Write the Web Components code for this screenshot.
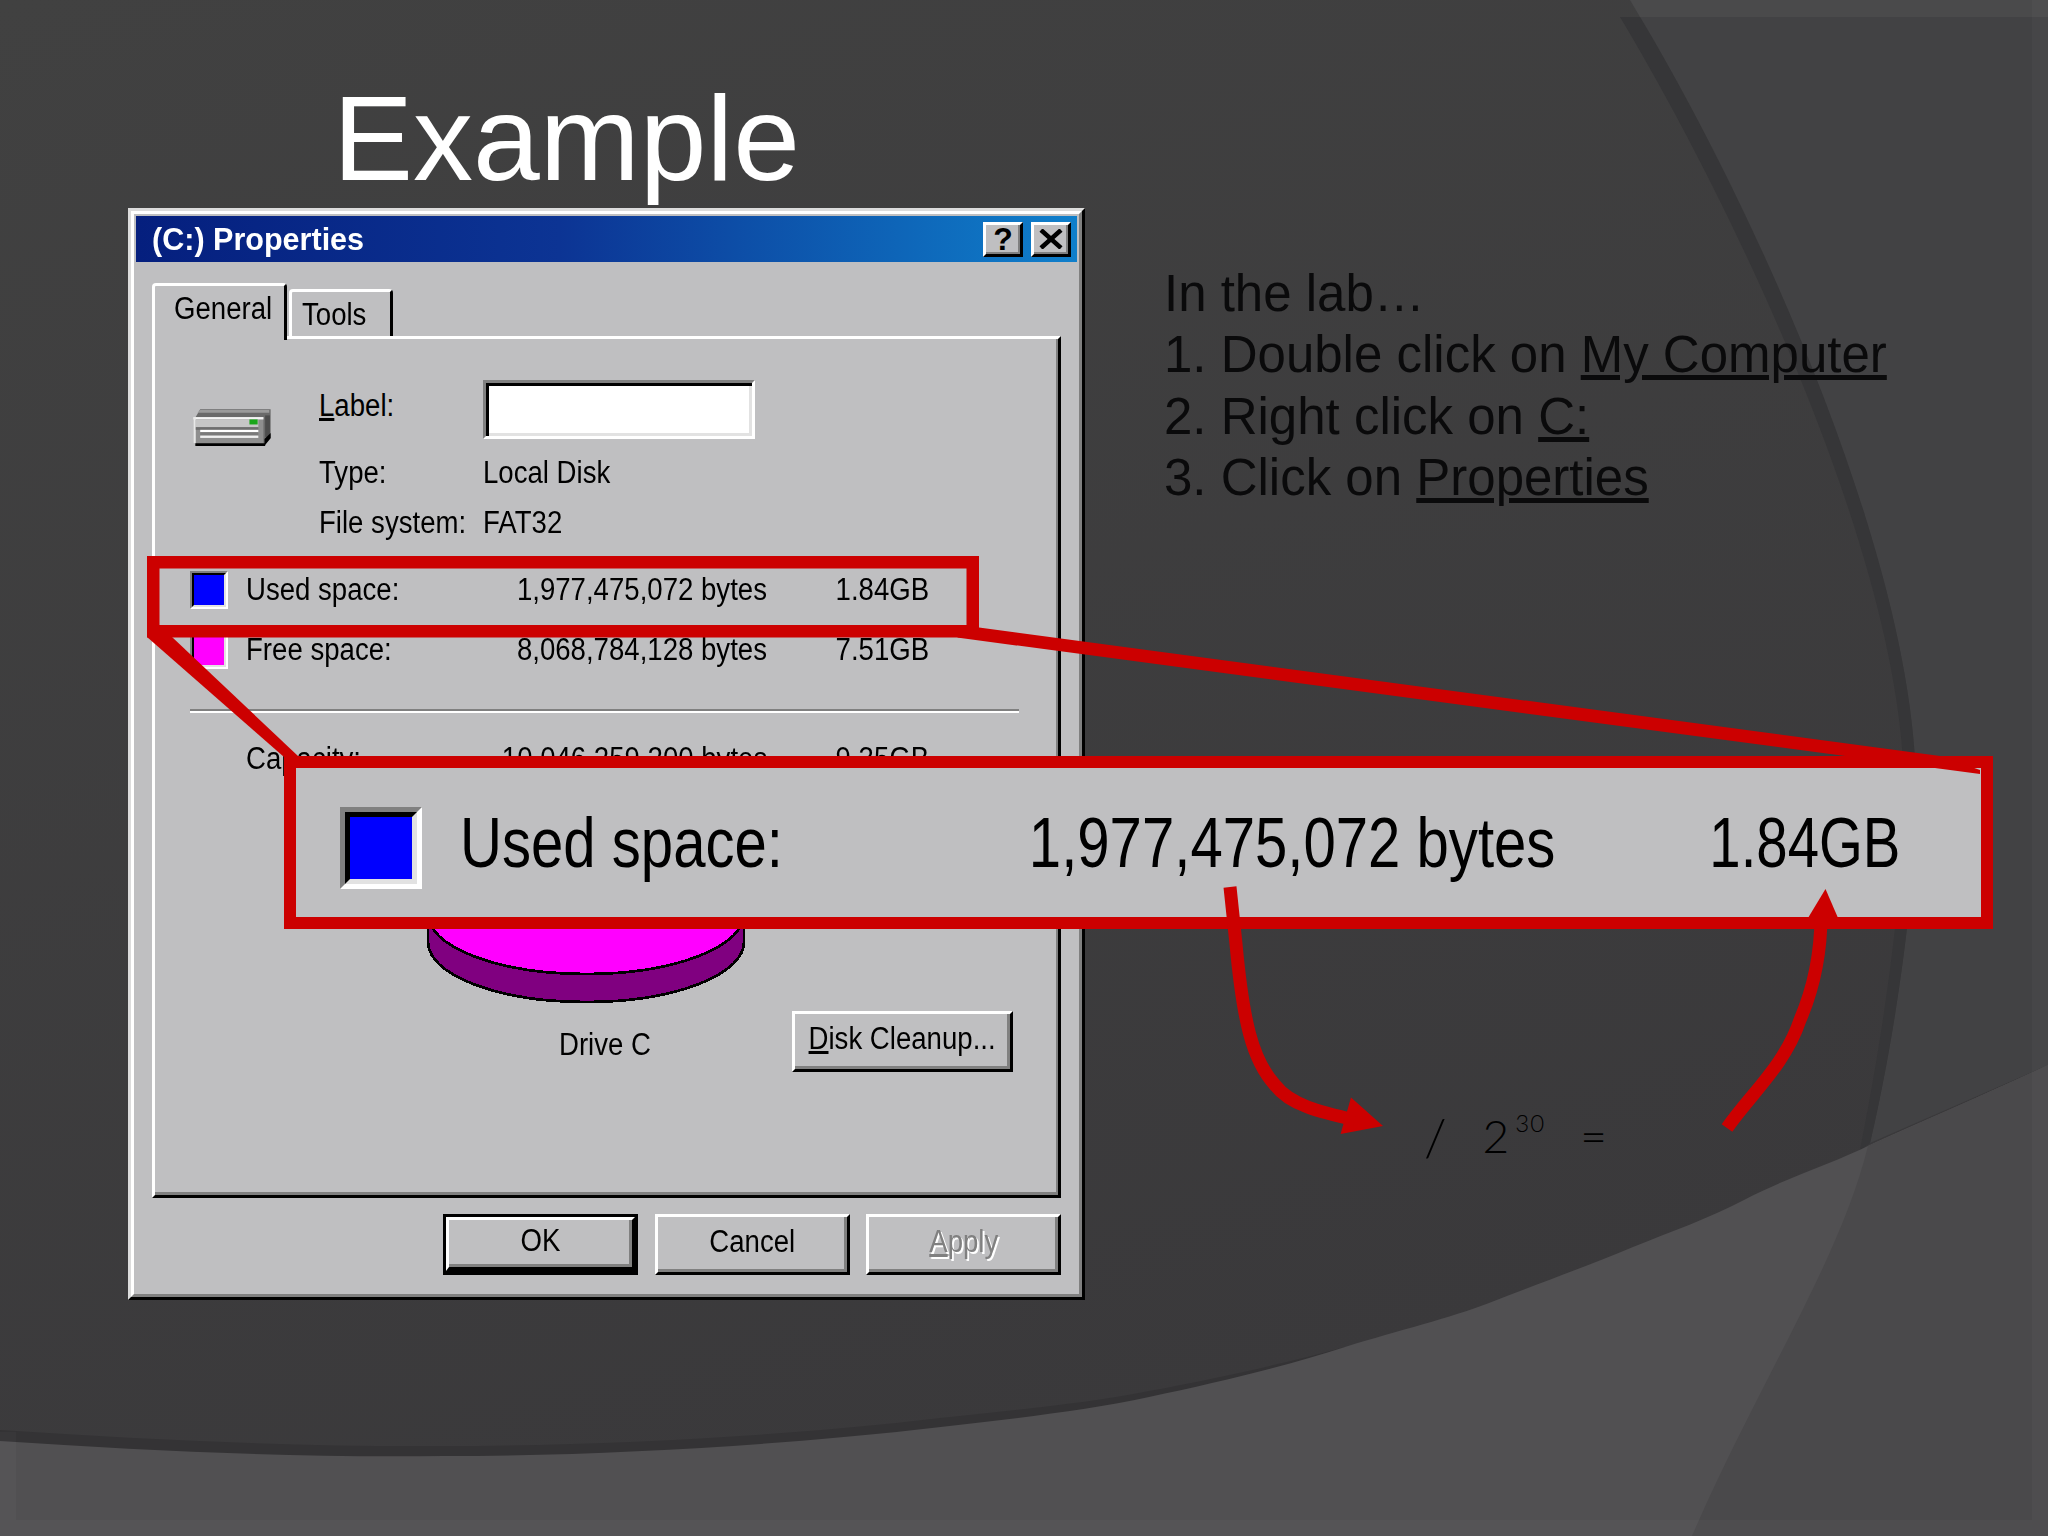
<!DOCTYPE html>
<html lang="en">
<head>
<meta charset="utf-8">
<title>Example</title>
<style>
   html, body { margin: 0; background: #3e3e40; }
   body { font-family: "Liberation Sans", Arial, sans-serif; }
</style>
</head>
<body>

<slide-deck>
   <slide-title slot="title">Example</slide-title>

   <win-dialog slot="window" caption="(C:) Properties">
      <win-tabs slot="tabs"></win-tabs>
      <drive-page slot="page"></drive-page>
      <win-btn slot="actions" default>OK</win-btn>
      <win-btn slot="actions">Cancel</win-btn>
      <win-btn slot="actions" disabled><u>A</u>pply</win-btn>
   </win-dialog>

   <lab-steps slot="notes">
      <div>In the lab…</div>
      <div>1. Double click on <u>My Computer</u></div>
      <div>2. Right click on <u>C:</u></div>
      <div>3. Click on <u>Properties</u></div>
   </lab-steps>

   <zoom-callout slot="overlay">
      <space-row swatch="#0000ff" label="Used space:" bytes="1,977,475,072 bytes" size="1.84GB" big></space-row>
   </zoom-callout>
</slide-deck>

<script>
// every bit of dialog text is stretched tall and narrow like the old bitmap font
const dlg_text_template = document.createElement('template');
dlg_text_template.innerHTML = `
   <style>
      :host {
         display: inline-block;
         white-space: nowrap;
         transform: scaleX(var(--sx, .89));
         transform-origin: left center;
      }
      :host([align="end"]) { transform-origin: right center; }
      :host([align="mid"]) { transform-origin: center center; }
   </style>
   <slot></slot>
`;

class DlgText extends HTMLElement
{
   connectedCallback()
   {
      if (this.shadowRoot) return;
      this.attachShadow({ mode: 'open' }).appendChild(dlg_text_template.content.cloneNode(true));
   }
}
customElements.define('dlg-text', DlgText);

const backdrop_template = document.createElement('template');
backdrop_template.innerHTML = `
   <style>
      :host { position: absolute; inset: 0; display: block; }
      svg { display: block; width: 100%; height: 100%; }
   </style>
   <svg viewBox="0 0 2048 1536" aria-hidden="true">
      <defs>
         <linearGradient id="base" x1="0" y1="0" x2="0.4" y2="1">
            <stop offset="0" stop-color="#414141"/>
            <stop offset="1" stop-color="#3a393b"/>
         </linearGradient>
      </defs>
      <rect width="2048" height="1536" fill="url(#base)"/>
      <path d="M1640 17 C1750 200 1916 560 1916 791 C1916 900 1892 1050 1870 1143 L2048 1065 L2048 17 Z" fill="#424244"/>
      <path d="M1630 0 L2048 0 L2048 17 L1640 17 Z" fill="#4a4a4b"/>
      <path d="M1620 17 C1730 200 1904 560 1904 791 C1904 900 1880 1050 1860 1150 L1870 1143 C1892 1050 1916 900 1916 791 C1916 560 1750 200 1640 17 Z" fill="#363638"/>
      <path d="M0 1430 C150 1440 300 1447 444 1446 C600 1446 780 1436 914 1421 C1000 1411 1080 1405 1149 1391 C1220 1378 1290 1362 1345 1347 L1345 1536 L0 1536 Z" fill="#343335"/>
      <path id="band" d="M0 1441 C150 1451 300 1458 444 1456 C600 1456 780 1445 914 1430 C1000 1420 1080 1412 1149 1397 C1220 1382 1290 1365 1345 1347 C1400 1330 1450 1318 1489 1303 C1540 1283 1590 1265 1633 1247 C1670 1232 1710 1218 1744 1200 C1790 1176 1830 1165 1874 1143 C1930 1118 1990 1092 2048 1065 L2048 1536 L0 1536 Z" fill="#515052"/>
      <path d="M1868 1146 C1930 1118 1990 1092 2048 1065 L2048 1536 L1692 1536 C1760 1380 1840 1260 1868 1146 Z" fill="#4a494b"/>
      <path d="M8 1432 V1528 H2040 V0" fill="none" stroke="#ffffff" stroke-opacity="0.025" stroke-width="16"/>
   </svg>
`;

class SlideBackdrop extends HTMLElement
{
   connectedCallback()
   {
      this.attachShadow({ mode: 'open' }).appendChild(backdrop_template.content.cloneNode(true));
   }
}
customElements.define('slide-backdrop', SlideBackdrop);

const deck_template = document.createElement('template');
deck_template.innerHTML = `
   <style>
      :host {
         display: block;
         position: relative;
         width: 2048px;
         height: 1536px;
         overflow: hidden;
      }
      .layout {
         position: relative;
         display: grid;
         grid-template-columns: 957px 1fr;
         grid-template-rows: 130px auto;
         column-gap: 80px;
         padding: 78px 0 0 128px;
      }
      .head { grid-column: 1; grid-row: 1; }
      .window { grid-column: 1; grid-row: 2; }
      .notes { grid-column: 2; grid-row: 1 / span 2; padding-top: 185px; }
   </style>
   <slide-backdrop></slide-backdrop>
   <div class="layout">
      <div class="head"><slot name="title"></slot></div>
      <div class="window"><slot name="window"></slot></div>
      <div class="notes"><slot name="notes"></slot></div>
   </div>
   <slot name="overlay"></slot>
`;

class SlideDeck extends HTMLElement
{
   connectedCallback()
   {
      this.attachShadow({ mode: 'open' }).appendChild(deck_template.content.cloneNode(true));
   }
}
customElements.define('slide-deck', SlideDeck);

const title_template = document.createElement('template');
title_template.innerHTML = `
   <style>
      :host {
         display: block;
         margin-left: 205px;
         font: 120px/120px "Liberation Sans", Arial, sans-serif;
         color: #ffffff;
      }
   </style>
   <slot></slot>
`;

class SlideTitle extends HTMLElement
{
   connectedCallback()
   {
      this.attachShadow({ mode: 'open' }).appendChild(title_template.content.cloneNode(true));
   }
}
customElements.define('slide-title', SlideTitle);

const steps_template = document.createElement('template');
steps_template.innerHTML = `
   <style>
      :host {
         display: block;
         margin-left: -1px;
         font: 51px/61.3px "Liberation Sans", Arial, sans-serif;
         color: #0a0a0b;
         white-space: nowrap;
      }
   </style>
   <slot></slot>
`;

class LabSteps extends HTMLElement
{
   connectedCallback()
   {
      this.attachShadow({ mode: 'open' }).appendChild(steps_template.content.cloneNode(true));
   }
}
customElements.define('lab-steps', LabSteps);

const dialog_template = document.createElement('template');
dialog_template.innerHTML = `
   <style>
      :host {
         display: block;
         box-sizing: border-box;
         width: 957px;
         height: 1092px;
         background: #bfbfc1;
         border: 3px solid;
         border-color: #dcdcdc #000000 #000000 #dcdcdc;
         font: 31px/1 "Liberation Sans", Arial, sans-serif;
         color: #000000;
      }
      .inner {
         box-sizing: border-box;
         height: 100%;
         padding: 2px;
         border: 3px solid;
         border-color: #ffffff #808080 #808080 #ffffff;
      }
      .titlebar {
         display: flex;
         align-items: center;
         gap: 8px;
         height: 46px;
         padding: 0 6px 0 16px;
         background: linear-gradient(to right, #051f7e 0%, #0c3494 45%, #0f7fcb 100%);
         color: #ffffff;
         font-weight: bold;
      }
      .caption { flex: 1; --sx: .985; }
      .tool {
         box-sizing: border-box;
         display: flex;
         align-items: center;
         justify-content: center;
         width: 40px;
         height: 35px;
         background: #bfbfc1;
         border: 3px solid;
         border-color: #ffffff #000000 #000000 #ffffff;
         box-shadow: inset -2px -2px 0 #808080;
         color: #000000;
      }
      .tool svg { display: block; }
      .body { padding: 21px 16px 0 16px; }
      .actions {
         display: flex;
         justify-content: flex-end;
         gap: 16.5px;
         margin-top: 16px;
      }
   </style>
   <div class="inner">
      <div class="titlebar">
         <div class="caption"><dlg-text id="caption"></dlg-text></div>
         <div class="tool"><dlg-text align="mid" style="--sx:1;font-size:32px">?</dlg-text></div>
         <div class="tool">
            <svg width="24" height="20" viewBox="0 0 24 20"><path d="M2 1 L22 19 M22 1 L2 19" stroke="#000" stroke-width="4.5" fill="none"/></svg>
         </div>
      </div>
      <div class="body">
         <slot name="tabs"></slot>
         <slot name="page"></slot>
         <div class="actions"><slot name="actions"></slot></div>
      </div>
   </div>
`;

class WinDialog extends HTMLElement
{
   connectedCallback()
   {
      const shadow_root = this.attachShadow({ mode: 'open' });
      shadow_root.appendChild(dialog_template.content.cloneNode(true));
      shadow_root.getElementById('caption').textContent = this.getAttribute('caption');
   }
}
customElements.define('win-dialog', WinDialog);

const tabs_template = document.createElement('template');
tabs_template.innerHTML = `
   <style>
      :host {
         display: flex;
         align-items: flex-end;
         position: relative;
         z-index: 1;
         height: 53px;
      }
      .tab {
         box-sizing: border-box;
         background: #bfbfc1;
         border: 3px solid;
         border-bottom: none;
         border-color: #ffffff #000000 transparent #ffffff;
         border-radius: 4px 4px 0 0;
      }
      .on {
         width: 135px;
         height: 57px;
         margin-bottom: -4px;
         padding: 7px 0 0 19px;
      }
      .off {
         width: 104px;
         height: 47px;
         margin-left: 2px;
         padding: 7px 0 0 10px;
      }
   </style>
   <div class="tab on"><dlg-text>General</dlg-text></div>
   <div class="tab off"><dlg-text>Tools</dlg-text></div>
`;

class WinTabs extends HTMLElement
{
   connectedCallback()
   {
      this.attachShadow({ mode: 'open' }).appendChild(tabs_template.content.cloneNode(true));
   }
}
customElements.define('win-tabs', WinTabs);

const btn_template = document.createElement('template');
btn_template.innerHTML = `
   <style>
      :host {
         box-sizing: border-box;
         display: flex;
         align-items: center;
         justify-content: center;
         width: 195px;
         height: 61px;
         padding-bottom: 6px;
         background: #bfbfc1;
         border: 3px solid;
         border-color: #ffffff #000000 #000000 #ffffff;
         box-shadow: inset -3px -3px 0 #808080;
         font-size: 31px;
         color: #000000;
      }
      :host([default]) {
         outline: 3px solid #000000;
         outline-offset: -3px;
         border-width: 6px 6px 8px 6px;
         border-color: #ffffff #000000 #000000 #ffffff;
      }
      :host([disabled]) {
         color: #808080;
         text-shadow: 2px 2px 0 #ffffff;
      }
      :host([compact]) {
         width: 221px;
         height: 61px;
      }
   </style>
   <dlg-text align="mid"><slot></slot></dlg-text>
`;

class WinBtn extends HTMLElement
{
   connectedCallback()
   {
      this.attachShadow({ mode: 'open' }).appendChild(btn_template.content.cloneNode(true));
   }
}
customElements.define('win-btn', WinBtn);

const row_template = document.createElement('template');
row_template.innerHTML = `
   <style>
      :host {
         display: grid;
         grid-template-columns: 56px 221px 300px 162px;
         align-items: center;
         height: 60px;
         font-size: 31px;
         line-height: 1;
         --edge: 2px;
         --chip: 38px;
      }
      :host([big]) {
         grid-template-columns: 120px 446px 650px 345px;
         height: 100%;
         padding-top: 2px;
         box-sizing: border-box;
         font-size: 70px;
         --sx: .83;
         --edge: 5.5px;
         --chip: 82px;
      }
      :host([big]) #size { --sx: .805; }
      .chip {
         box-sizing: border-box;
         width: var(--chip);
         height: var(--chip);
         border: var(--edge) solid;
         border-color: #808080 #ffffff #ffffff #808080;
      }
      :host([big]) .chip { margin-top: 9px; }
      .chip > div {
         box-sizing: border-box;
         height: 100%;
         border: var(--edge) solid;
         border-color: #000000 #e2e2e2 #e2e2e2 #000000;
      }
      .chip.none { visibility: hidden; }
      .num { text-align: right; }
   </style>
   <div class="chip"><div></div></div>
   <div><dlg-text id="label"></dlg-text></div>
   <div class="num"><dlg-text id="bytes" align="end"></dlg-text></div>
   <div class="num"><dlg-text id="size" align="end"></dlg-text></div>
`;

class SpaceRow extends HTMLElement
{
   connectedCallback()
   {
      const shadow_root = this.attachShadow({ mode: 'open' });
      shadow_root.appendChild(row_template.content.cloneNode(true));
      for (const name of ['label', 'bytes', 'size'])
      {
         shadow_root.getElementById(name).textContent = this.getAttribute(name);
      }
      const chip = shadow_root.querySelector('.chip');
      if (this.hasAttribute('swatch')) chip.firstElementChild.style.background = this.getAttribute('swatch');
      else chip.classList.add('none');
   }
}
customElements.define('space-row', SpaceRow);

const page_template = document.createElement('template');
page_template.innerHTML = `
   <style>
      :host {
         display: block;
         box-sizing: border-box;
         height: 862px;
         margin-top: 0;
         padding: 41px 35px 0 35px;
         background: #bfbfc1;
         border: 3px solid;
         border-color: #ffffff #000000 #000000 #ffffff;
         box-shadow: inset -2px -3px 0 #808080;
      }
      .info {
         display: grid;
         grid-template-columns: 129px 164px 1fr;
         grid-template-rows: 59px 50px 50px;
         align-items: center;
      }
      .type-row { padding-top: 17px; }
      .drive {
         grid-column: 1;
         grid-row: 1;
         align-self: start;
         margin: 28px 0 0 2px;
         display: block;
      }
      .input {
         box-sizing: border-box;
         width: 272px;
         height: 59px;
         background: #ffffff;
         border: 3px solid;
         border-color: #808080 #ffffff #ffffff #808080;
         box-shadow: inset 3px 3px 0 #000000, inset -3px -3px 0 #e2e2e2;
      }
      .spaces { margin-top: 20.5px; }
      hr {
         width: 829px;
         margin: 29px 0 0;
         height: 4px;
         border: 0;
         background: linear-gradient(to bottom, #808080 50%, #ffffff 50%);
      }
      .capacity { margin-top: 16px; }
      .pie {
         display: block;
         margin-left: 237px;
      }
      .foot {
         display: flex;
         align-items: center;
         margin-top: 8px;
         padding: 0 10px 0 369px;
      }
      .foot dlg-text { margin-top: 6px; }
      .foot win-btn { margin-left: auto; }
   </style>
   <div class="info">
      <svg class="drive" width="80" height="39" viewBox="36 38 234 116" preserveAspectRatio="none" aria-hidden="true">
         <path d="M60 42 H266 V126 L246 150 H46 V66 Z" fill="#6a6a6a"/>
         <path d="M60 44 H262 V52 H52 Z" fill="#9a9a9a"/>
         <rect x="250" y="60" width="14" height="64" fill="#4c4c4c"/>
         <path d="M248 130 L266 112 V128 L248 150 Z" fill="#000"/>
         <rect x="40" y="65" width="205" height="78" fill="#8e8e8e"/>
         <rect x="40" y="65" width="205" height="7" fill="#f4f4f4"/>
         <rect x="40" y="65" width="7" height="78" fill="#e8e8e8"/>
         <rect x="47" y="72" width="183" height="23" fill="#c6c6c6"/>
         <rect x="47" y="95" width="183" height="8" fill="#6e6e6e"/>
         <rect x="60" y="103" width="170" height="7" fill="#ffffff"/>
         <rect x="60" y="110" width="170" height="10" fill="#7a7a7a"/>
         <rect x="60" y="120" width="170" height="7" fill="#f0f0f0"/>
         <rect x="204" y="72" width="24" height="15" fill="#1aa61a"/>
         <rect x="46" y="143" width="204" height="8" fill="#000"/>
      </svg>
      <div style="grid-column:2;grid-row:1"><dlg-text style="transform:translateY(-4px) scaleX(.89)"><u>L</u>abel:</dlg-text></div>
      <div class="input" style="grid-column:3;grid-row:1"></div>
      <div class="type-row" style="grid-column:2;grid-row:2"><dlg-text>Type:</dlg-text></div>
      <div class="type-row" style="grid-column:3;grid-row:2"><dlg-text>Local Disk</dlg-text></div>
      <div class="type-row" style="grid-column:2;grid-row:3"><dlg-text>File system:</dlg-text></div>
      <div class="type-row" style="grid-column:3;grid-row:3"><dlg-text>FAT32</dlg-text></div>
   </div>
   <div class="spaces">
      <space-row swatch="#0000ff" label="Used space:" bytes="1,977,475,072 bytes" size="1.84GB"></space-row>
      <space-row swatch="#ff00ff" label="Free space:" bytes="8,068,784,128 bytes" size="7.51GB"></space-row>
   </div>
   <hr>
   <space-row class="capacity" label="Capacity:" bytes="10,046,259,200 bytes" size="9.35GB"></space-row>
   <svg class="pie" width="320" height="214" viewBox="0 0 320 214" shape-rendering="crispEdges" aria-hidden="true">
      <path d="M1 125 V153 A158 60 0 0 0 317 153 V125 Z" fill="#800080" stroke="#000" stroke-width="2.7"/>
      <ellipse cx="159" cy="125" rx="158" ry="60" fill="#ff00ff" stroke="#000" stroke-width="2.7"/>
   </svg>
   <div class="foot">
      <dlg-text>Drive C</dlg-text>
      <win-btn compact><u>D</u>isk Cleanup...</win-btn>
   </div>
`;

class DrivePage extends HTMLElement
{
   connectedCallback()
   {
      this.attachShadow({ mode: 'open' }).appendChild(page_template.content.cloneNode(true));
   }
}
customElements.define('drive-page', DrivePage);

// the red magnifier lies over the dialog, its box and arrows sit at their own spots
const callout_template = document.createElement('template');
callout_template.innerHTML = `
   <style>
      :host { position: absolute; inset: 0; display: block; pointer-events: none; }
      .box {
         position: absolute;
         left: 284px;
         top: 755.5px;
         width: 1709px;
         height: 173.5px;
         box-sizing: border-box;
         padding-left: 43.5px;
         background: #bfbfc1;
         border: 12.5px solid #cc0000;
         font-family: "Liberation Sans", Arial, sans-serif;
         color: #000000;
      }
      svg { position: absolute; left: 0; top: 0; }
      .math {
         position: absolute;
         left: 1424px;
         top: 1108px;
         display: flex;
         align-items: flex-start;
         font-family: Lato, "Liberation Sans", sans-serif;
         font-weight: 300;
         font-size: 46px;
         line-height: 56px;
         color: #000000;
      }
      .math sup { font-size: 24px; line-height: 30px; letter-spacing: 1px; margin: 0 35px 0 6px; }
      .math .slash { font-size: 52px; margin-right: 36px; }
   </style>
   <div class="box"><slot></slot></div>
   <svg width="2048" height="1536" viewBox="0 0 2048 1536" aria-hidden="true">
      <g fill="#cc0000">
         <path fill-rule="evenodd" d="M147 556 H979 V637.5 H147 Z M159.5 568.5 V625 H966.5 V568.5 Z"/>
         <polygon points="957,637.5 979,627.5 1940,756 1980,770 1980,774"/>
         <polygon points="147,637 172,637 298,756 284,757"/>
         <polygon points="1383,1126 1351,1097.5 1340.6,1134"/>
         <polygon points="1825.5,889 1808.6,917 1837.6,917"/>
      </g>
      <g fill="none" stroke="#cc0000" stroke-width="13">
         <path d="M1230 887 L1236 944 C1243 1020 1252 1060 1275 1085 C1290 1105 1320 1112 1355 1120"/>
         <path d="M1727 1128 C1750 1095 1785 1065 1800 1020 C1815 985 1821 950 1821 915"/>
      </g>
   </svg>
   <div class="math">
      <span class="slash">/</span><span>2</span><sup>30</sup><span>=</span>
   </div>
`;

class ZoomCallout extends HTMLElement
{
   connectedCallback()
   {
      this.attachShadow({ mode: 'open' }).appendChild(callout_template.content.cloneNode(true));
   }
}
customElements.define('zoom-callout', ZoomCallout);
</script>
</body>
</html>
